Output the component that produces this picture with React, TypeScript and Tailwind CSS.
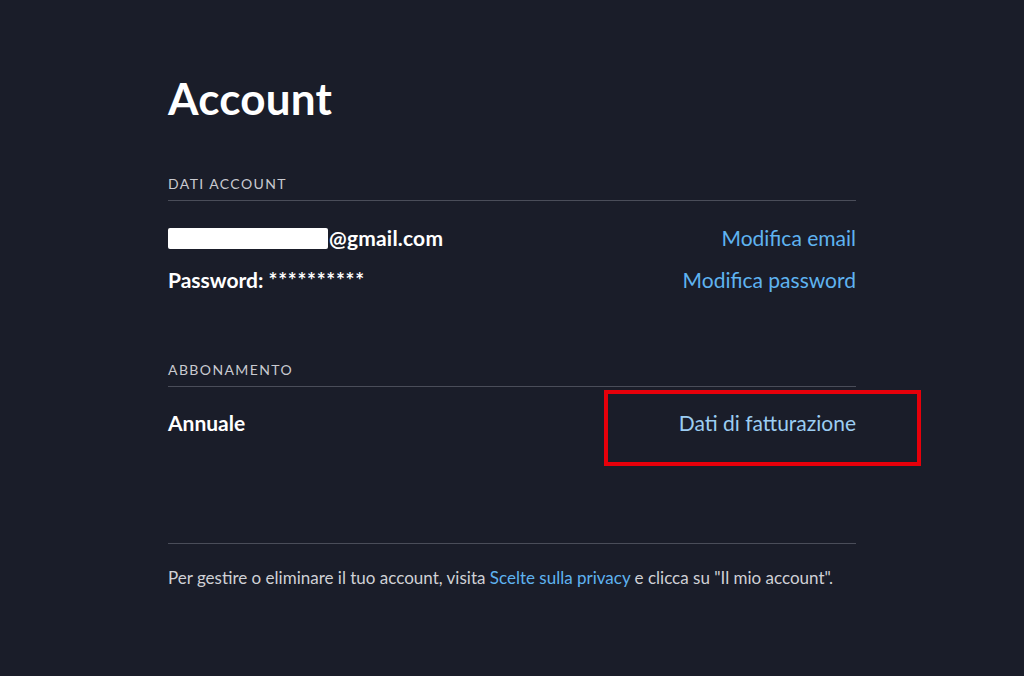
export default function App() {
  return (
    <div className="min-h-screen w-full bg-[#1a1d29] font-['Lato','Noto_Sans',sans-serif] text-white">
      <div className="mx-auto w-[688px] pt-[70px]">
        <h1 className="text-[44px] font-bold leading-[56px] tracking-[0.2px]">Account</h1>

        {/* Dati account */}
        <section className="mt-[50px]">
          <h2 className="border-b border-[#4a4d59] pb-[8px] text-[14px] uppercase leading-[16px] tracking-[1.4px] text-[#c9cad0]">
            Dati account
          </h2>
          <div className="mt-[26px] flex items-center justify-between">
            <div className="flex items-center text-[21px] font-bold leading-[22px] tracking-[0.2px]">
              <span className="mr-[1px] inline-block h-[21px] w-[160px] rounded-[2px] bg-white" />
              <span>@gmail.com</span>
            </div>
            <a className="text-[21px] leading-[22px] text-[#5fb3f0]">Modifica email</a>
          </div>
          <div className="mt-[20px] flex items-center justify-between">
            <div className="text-[21px] font-bold leading-[22px]">
              Password: <span className="tracking-[0.7px]">**********</span>
            </div>
            <a className="text-[21px] leading-[22px] text-[#5fb3f0]">Modifica password</a>
          </div>
        </section>

        {/* Abbonamento */}
        <section className="mt-[71px]">
          <h2 className="border-b border-[#4a4d59] pb-[8px] text-[14px] uppercase leading-[16px] tracking-[1.4px] text-[#c9cad0]">
            Abbonamento
          </h2>
          <div className="relative mt-[25px] flex items-center justify-between">
            <div className="text-[21px] font-bold leading-[22px]">Annuale</div>
            <a className="text-[21px] leading-[22px] text-[#9ccdf2]">Dati di fatturazione</a>
            <div className="pointer-events-none absolute left-[436px] top-[-22px] h-[76px] w-[317px] border-[4px] border-[#e6000a]" />
          </div>
        </section>

        <div className="mt-[109px] border-t border-[#4a4d59] pt-[24px] text-[17px] leading-[20px] text-[#d0d1d6]">
          Per gestire o eliminare il tuo account, visita{" "}
          <a className="text-[#5fb3f0]">Scelte sulla privacy</a> e clicca su "Il mio account".
        </div>
      </div>
    </div>
  );
}
